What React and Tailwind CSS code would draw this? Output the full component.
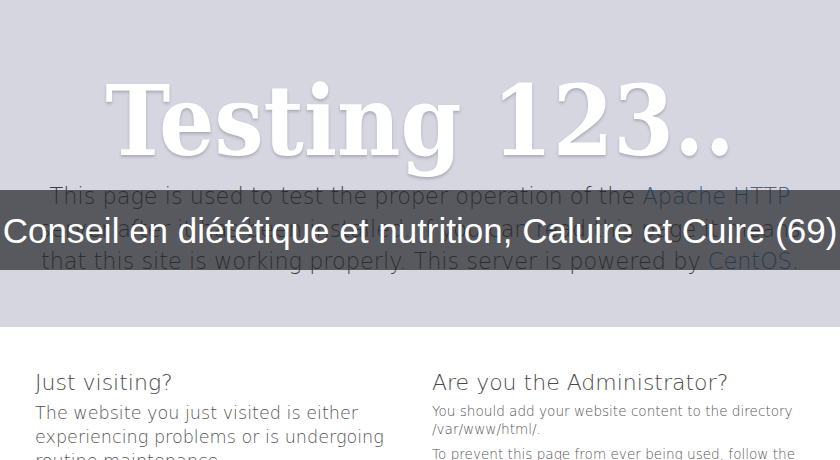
export default function App() {
    return (
        <div className="relative w-[840px] h-[460px] overflow-hidden bg-white">
            {/* header */}
            <div className="h-[327px] bg-[#d5d6df] pt-[73px] text-center">
                <h1
                    className="text-[97px] leading-none font-bold text-white [text-shadow:0_2px_3px_rgba(40,50,80,0.25)]"
                    style={{ fontFamily: '"DejaVu Serif Condensed", "DejaVu Serif", serif', fontStretch: "condensed" }}
                >
                    Testing 123..
                </h1>
                <p
                    className="mt-[10px] px-[30px] text-[22.4px] leading-[32.5px] font-extralight text-[#3c3c3c]"
                    style={{ fontFamily: '"DejaVu Sans", sans-serif' }}
                >
                    This page is used to test the proper operation of the{" "}
                    <span className="text-[#2f6ea5]">Apache HTTP</span> server after it has been installed. If you can
                    read this page it means that this site is working properly. This server is powered by{" "}
                    <span className="text-[#2f6ea5]">CentOS</span>.
                </p>
            </div>

            {/* content */}
            <div className="flex pt-[41px]" style={{ fontFamily: '"DejaVu Sans", sans-serif' }}>
                <div className="w-[420px] pl-[35px] pr-[20px]">
                    <h2 className="text-[22px] leading-[29px] font-extralight text-[#4a4a4a]">Just visiting?</h2>
                    <p className="mt-[4px] text-[17.6px] leading-[24px] font-extralight text-[#555]">
                        The website you just visited is either experiencing problems or is undergoing routine
                        maintenance.
                    </p>
                </div>
                <div className="w-[420px] pl-[12px] pr-[30px]">
                    <h2 className="text-[22px] leading-[29px] font-extralight text-[#4a4a4a]">
                        Are you the Administrator?
                    </h2>
                    <p className="mt-[5px] text-[13.6px] leading-[18px] font-extralight text-[#555]">
                        You should add your website content to the directory /var/www/html/.
                    </p>
                    <p className="mt-[7px] text-[13.6px] leading-[18px] font-extralight text-[#555]">
                        To prevent this page from ever being used, follow the instructions in the file
                        /etc/httpd/conf.d/welcome.conf.
                    </p>
                </div>
            </div>

            {/* caption band */}
            <div className="absolute left-0 right-0 top-[190px] h-[80px] flex items-center justify-center bg-[rgba(40,40,44,0.72)]">
                <span
                    className="text-[35px] leading-none text-white whitespace-nowrap"
                    style={{ fontFamily: '"Liberation Sans", Arial, sans-serif' }}
                >
                    Conseil en diététique et nutrition, Caluire et Cuire (69)
                </span>
            </div>
        </div>
    );
}
